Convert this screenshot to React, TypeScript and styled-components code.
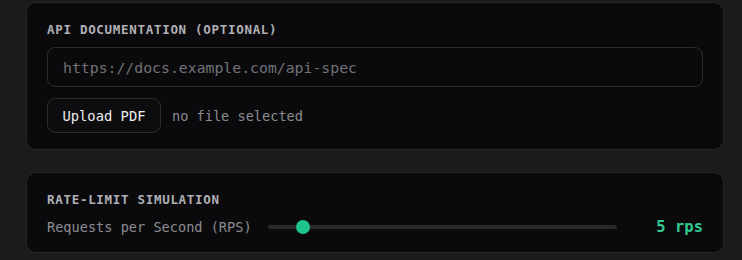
import React, { useState } from "react";
import styled, { createGlobalStyle } from "styled-components";

const Global = createGlobalStyle`
  html, body { margin: 0; padding: 0; background: #1b1b1d; }
  body { font-family: "DejaVu Sans Mono", "Liberation Mono", monospace; }
  * { box-sizing: border-box; }
`;

const Page = styled.div`
  display: flex;
  flex-direction: column;
  gap: 22px;
  padding: 2px 18px 0 26px;
`;

const Card = styled.section`
  background: #0a0a0c;
  border: 1px solid #27272a;
  border-radius: 10px;
  padding: 20px 20px 16px;
  display: flex;
  flex-direction: column;
`;

const Label = styled.div`
  font-size: 12.5px;
  line-height: 14px;
  font-weight: 700;
  letter-spacing: 0.7px;
  color: #b0b0b5;
  text-transform: uppercase;
  margin-bottom: 10px;
`;

const Input = styled.input`
  height: 40px;
  width: 100%;
  background: #0a0a0c;
  border: 1px solid #2c2c30;
  border-radius: 8px;
  padding: 0 15px;
  font-family: "DejaVu Sans Mono", monospace;
  font-size: 14.8px;
  color: #e5e5e5;
  outline: none;
  &::placeholder { color: #727277; }
`;

const FileRow = styled.div`
  display: flex;
  align-items: center;
  gap: 11px;
  margin-top: 11px;
`;

const Button = styled.button`
  height: 35px;
  width: 114px;
  background: #0d0d0f;
  border: 1px solid #2c2c30;
  border-radius: 8px;
  color: #ececee;
  font-family: "DejaVu Sans Mono", monospace;
  font-size: 13.8px;
  cursor: pointer;
`;

const Muted = styled.span`
  font-size: 13.6px;
  color: #8a8a8f;
`;

const SliderRow = styled.div`
  display: flex;
  align-items: center;
  gap: 16px;
  height: 19px;
`;

const RowLabel = styled.span`
  font-size: 13.6px;
  color: #8c8c91;
  flex-shrink: 0;
`;

const Track = styled.div`
  position: relative;
  flex: 1;
  height: 4px;
  border-radius: 2px;
  background: #2a2a2d;
`;

const Thumb = styled.div`
  position: absolute;
  top: 50%;
  width: 14px;
  height: 14px;
  border-radius: 50%;
  background: #1fc38c;
  transform: translate(-50%, -50%);
`;

const Value = styled.span`
  width: 70px;
  text-align: right;
  font-size: 15.5px;
  font-weight: 700;
  color: #34c98f;
  flex-shrink: 0;
`;

export default function App() {
  const [rps] = useState(5);
  const pct = 10;
  return (
    <>
      <Global />
      <Page>
        <Card>
          <Label>API Documentation (optional)</Label>
          <Input placeholder="https://docs.example.com/api-spec" />
          <FileRow>
            <Button>Upload PDF</Button>
            <Muted>no file selected</Muted>
          </FileRow>
        </Card>
        <Card>
          <Label>Rate-Limit Simulation</Label>
          <SliderRow>
            <RowLabel>Requests per Second (RPS)</RowLabel>
            <Track>
              <Thumb style={{ left: `${pct}%` }} />
            </Track>
            <Value>{rps} rps</Value>
          </SliderRow>
        </Card>
      </Page>
    </>
  );
}
